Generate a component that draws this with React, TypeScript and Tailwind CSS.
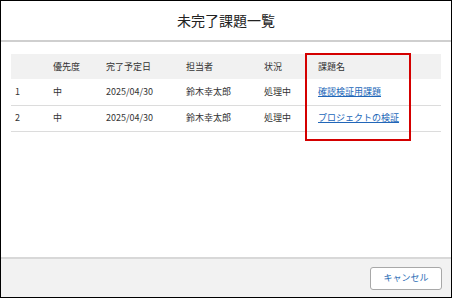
import React from "react";

const rows = [
  { no: "1", pri: "中", date: "2025/04/30", person: "鈴木幸太郎", status: "処理中", title: "確認検証用課題" },
  { no: "2", pri: "中", date: "2025/04/30", person: "鈴木幸太郎", status: "処理中", title: "プロジェクトの検証" },
];

export default function App() {
  const font = { fontFamily: '"Noto Sans CJK JP", "Noto Sans", sans-serif' };
  return (
    <div
      className="w-[452px] h-[298px] border border-black bg-white flex flex-col text-[#333]"
      style={font}
    >
      <div className="h-[41px] shrink-0 border-b-2 border-[#cfcfcf] flex items-center justify-center text-[14px] text-[#222]">
        未完了課題一覧
      </div>
      <div className="flex-1 px-[10px] pt-[12px] relative">
        <table className="w-full border-collapse text-[9px] text-left">
          <thead>
            <tr className="bg-[#f1f1f1] h-[25px]">
              <th className="w-[38px] pl-[4px] font-normal"></th>
              <th className="w-[53px] pl-[4px] font-normal">優先度</th>
              <th className="w-[80px] pl-[4px] font-normal">完了予定日</th>
              <th className="w-[78px] pl-[4px] font-normal">担当者</th>
              <th className="w-[54px] pl-[4px] font-normal">状況</th>
              <th className="pl-[4px] font-normal">課題名</th>
            </tr>
          </thead>
          <tbody>
            {rows.map((r) => (
              <tr key={r.no} className="h-[26px] border-b border-[#dcdcdc]">
                <td className="pl-[4px]">{r.no}</td>
                <td className="pl-[4px]">{r.pri}</td>
                <td className="pl-[4px]">{r.date}</td>
                <td className="pl-[4px]">{r.person}</td>
                <td className="pl-[4px]">{r.status}</td>
                <td className="pl-[4px]">
                  <a href="#" className="text-[#2166b8] underline">{r.title}</a>
                </td>
              </tr>
            ))}
          </tbody>
        </table>
        <div className="absolute left-[304px] top-[11px] w-[106px] h-[88px] border-2 border-[#d40000]"></div>
      </div>
      <div className="h-[40px] shrink-0 bg-[#f2f2f2] border-t-2 border-[#d8d8d8] flex items-center justify-end pr-[9px]">
        <button className="w-[72px] h-[23px] bg-white border border-[#a8a8a8] rounded-[3px] text-[9px] text-[#2b6cb5]">
          キャンセル
        </button>
      </div>
    </div>
  );
}
